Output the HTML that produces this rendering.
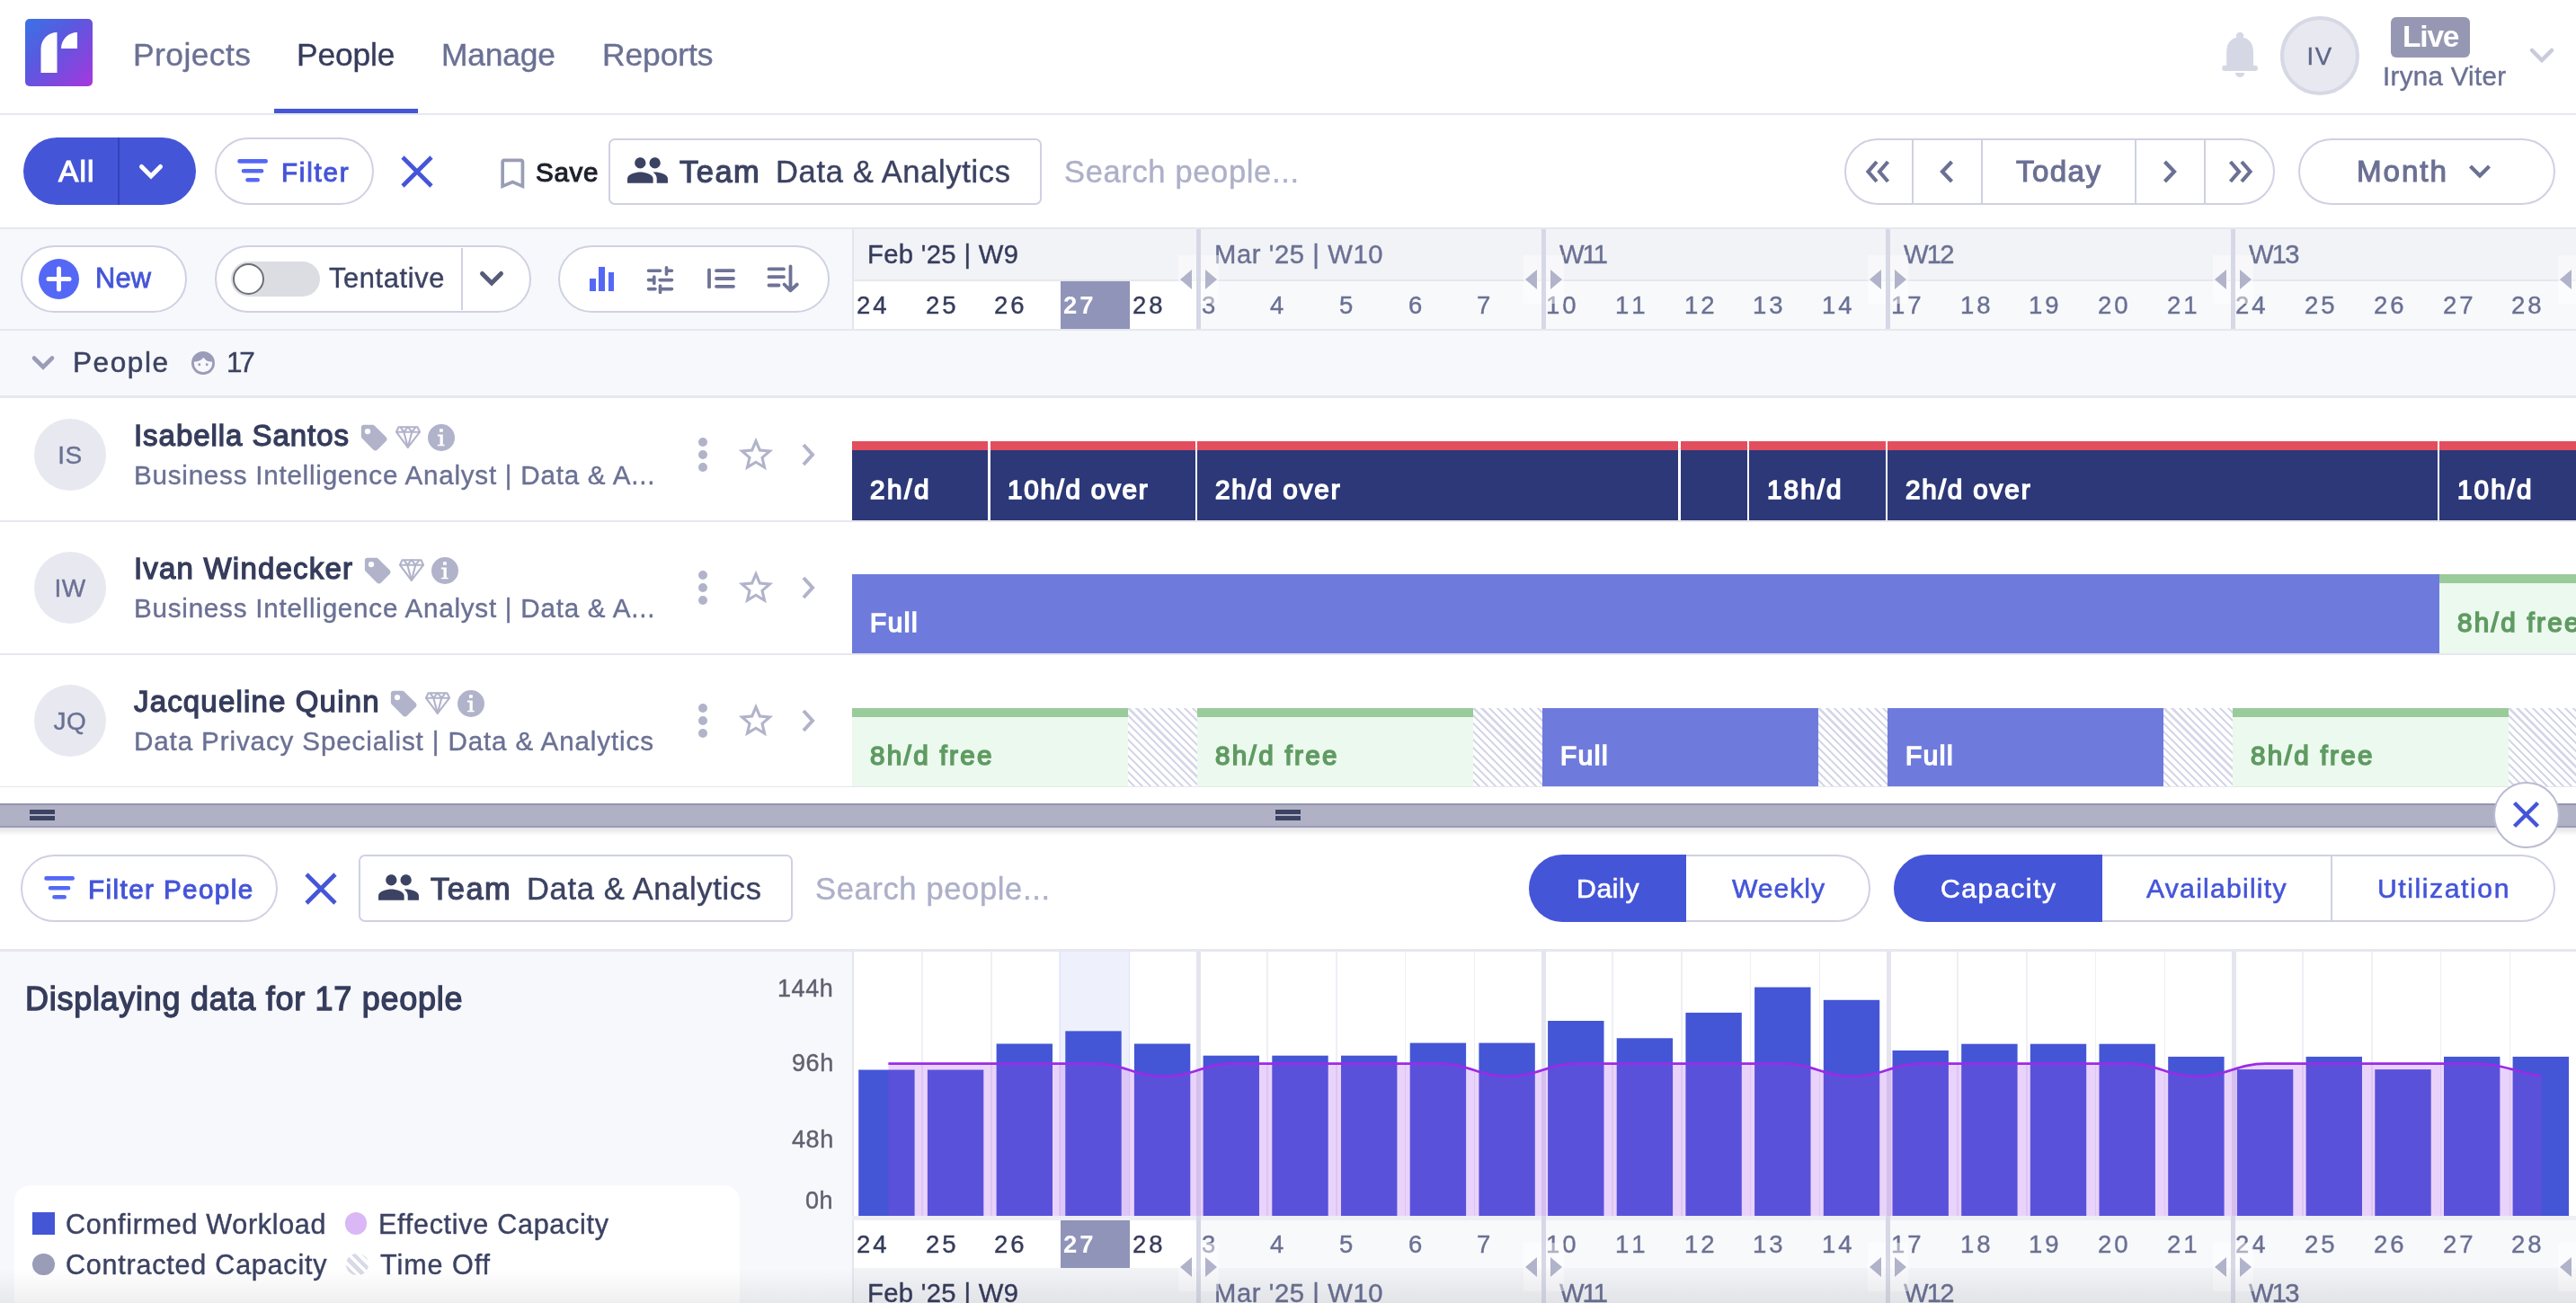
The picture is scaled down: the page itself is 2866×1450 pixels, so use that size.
<!DOCTYPE html>
<html lang="en"><head><meta charset="utf-8"><title>People planner</title>
<style>
html,body{margin:0;padding:0}
body{width:2866px;height:1450px;overflow:hidden;position:relative;background:#fff;
font-family:"Liberation Sans",sans-serif;}
.r{position:absolute;display:block}
.t{position:absolute;white-space:nowrap;line-height:1;will-change:transform;}
</style></head>
<body>
<div class="r" style="left:28px;top:21px;width:75px;height:75px;border-radius:5px;background:linear-gradient(135deg,#3a72e6 0%,#5a59e0 40%,#8545de 75%,#a838dc 100%)"></div>
<svg class="r" style="left:28px;top:21px;" width="75" height="75" viewBox="0 0 75 75"><path d="M17.5 60V33c0-10 8-18 18-18v45z" fill="#fff"/><path d="M40 33c0-10 8-18 18-18v18z" fill="#fff"/></svg>
<div class="t" id="t1" style="left:148.3px;top:43.6px;font-size:35.4px;color:#6b7194;font-weight:400;letter-spacing:0.451px;-webkit-text-stroke:0.4px #6b7194;">Projects</div>
<div class="t" id="t2" style="left:330.3px;top:43.6px;font-size:35.4px;color:#363c5c;font-weight:400;letter-spacing:-0.141px;-webkit-text-stroke:0.4px #363c5c;">People</div>
<div class="t" id="t3" style="left:491.3px;top:43.6px;font-size:35.4px;color:#6b7194;font-weight:400;letter-spacing:-0.181px;-webkit-text-stroke:0.4px #6b7194;">Manage</div>
<div class="t" id="t4" style="left:670.3px;top:43.6px;font-size:35.4px;color:#6b7194;font-weight:400;letter-spacing:-0.070px;-webkit-text-stroke:0.4px #6b7194;">Reports</div>
<div class="r" style="left:0px;top:126px;width:2866px;height:2px;background:#e6e7ef;"></div>
<div class="r" style="left:305px;top:121px;width:160px;height:5px;background:#4555d8;"></div>
<svg class="r" style="left:2470px;top:34px;" width="44" height="54" viewBox="0 0 44 54"><g fill="#d5d7e5"><circle cx="22.1" cy="6" r="4.2"/><path d="M7.200 39V24C7.200 13 13 7.500 22.100 7.500S37 13 37 24V39z"/><rect x="2.200" y="38.800" width="39.800" height="6.200" rx="3.100"/><path d="M17 47h10.200a5.100 5.100 0 0 1-10.200 0z"/></g></svg>
<div class="r" style="left:2537px;top:18px;width:88px;height:88px;border-radius:50%;background:#e7e8f0;border:4.5px solid #d6d8e5;box-sizing:border-box"></div>
<div class="t" id="t5" style="left:2581.0px;transform:translateX(-50%);top:48.7px;font-size:27.5px;color:#5f6587;font-weight:400;letter-spacing:1.5px;-webkit-text-stroke:0.4px #5f6587;">IV</div>
<div class="r" style="left:2659.5px;top:19px;width:88.5px;height:44.7px;background:#9698b3;border-radius:6px;"></div>
<div class="t" id="t6" style="left:2672.8px;top:23.8px;font-size:33.5px;color:#fff;font-weight:700;letter-spacing:-1.182px;">Live</div>
<div class="t" id="t7" style="left:2651.3px;top:70.4px;font-size:29.5px;color:#6b7194;font-weight:400;letter-spacing:0.309px;-webkit-text-stroke:0.4px #6b7194;">Iryna Viter</div>
<svg class="r" style="left:2812px;top:51px;" width="32" height="22" viewBox="0 0 32 22"><path d="M5 5l11 11L27 5" fill="none" stroke="#c9cbdb" stroke-width="4.5" stroke-linecap="round"/></svg>
<div class="r" style="left:26px;top:153px;width:192px;height:74.5px;border-radius:38px;background:#4555d8"></div>
<div class="r" style="left:131px;top:153px;width:2px;height:74.5px;background:#3241bd;"></div>
<div class="t" id="t8" style="left:65.3px;top:173.6px;font-size:33.5px;color:#fff;font-weight:400;letter-spacing:1.133px;-webkit-text-stroke:1.1px #fff;">All</div>
<svg class="r" style="left:152px;top:180px;" width="32" height="22" viewBox="0 0 32 22"><path d="M5.500 5.500l10.500 10.500L26.500 5.500" fill="none" stroke="#fff" stroke-width="5" stroke-linecap="round"/></svg>
<div class="r" style="left:238.5px;top:153px;width:177px;height:74.5px;box-sizing:border-box;border-radius:37.25px;background:#fff;border:2px solid #cfd1e2;"></div>
<svg class="r" style="left:262px;top:175px;" width="38" height="30" viewBox="0 0 38 30"><path d="M4.5 4.4h29.2M9 15.3h20.1M13.5 25.3h11.2" stroke="#5468f5" stroke-width="4.6" stroke-linecap="round" fill="none"/></svg>
<div class="t" id="t9" style="left:313.1px;top:176.7px;font-size:29.6px;color:#4555d8;font-weight:400;letter-spacing:1.787px;-webkit-text-stroke:1px #4555d8;">Filter</div>
<svg class="r" style="left:444px;top:172px;" width="40" height="38" viewBox="0 0 40 38"><path d="M4 3l32 32M36 3L4 35" stroke="#4555d8" stroke-width="4.6" fill="none"/></svg>
<svg class="r" style="left:548.3px;top:171px;" width="44.6" height="44.6" viewBox="0 0 24 24"><path fill="#9a9db6" d="M17 3H7c-1.1 0-1.99.9-1.99 2L5 21l7-3 7 3V5c0-1.1-.9-2-2-2zm0 15l-5-2.18L7 18V5h10v13z"/></svg>
<div class="t" id="t10" style="left:596.0px;top:176.5px;font-size:29.6px;color:#1d202c;font-weight:400;letter-spacing:0.682px;-webkit-text-stroke:1.1px #1d202c;">Save</div>
<div class="r" style="left:676.5px;top:153.5px;width:482px;height:74px;box-sizing:border-box;border-radius:7px;background:#fff;border:2px solid #cfd1e2"></div>
<svg class="r" style="left:696px;top:165.3px;" width="49" height="49" viewBox="0 0 24 24"><path fill="#3c4262" d="M16 11c1.66 0 2.99-1.34 2.99-3S17.66 5 16 5c-1.66 0-3 1.34-3 3s1.34 3 3 3zm-8 0c1.66 0 2.99-1.34 2.99-3S9.66 5 8 5C6.34 5 5 6.34 5 8s1.34 3 3 3zm0 2c-2.33 0-7 1.17-7 3.5V19h14v-2.5c0-2.33-4.67-3.5-7-3.5zm8 0c-.29 0-.62.02-.97.05 1.16.84 1.97 1.97 1.97 3.45V19h6v-2.5c0-2.33-4.67-3.5-7-3.5z"/></svg>
<div class="t" id="t11" style="left:756.3px;top:174.3px;font-size:34.5px;color:#3c4262;font-weight:400;letter-spacing:1.475px;-webkit-text-stroke:1.2px #3c4262;">Team</div>
<div class="t" id="t12" style="left:862.8px;top:174.3px;font-size:34.5px;color:#3c4262;font-weight:400;letter-spacing:0.647px;-webkit-text-stroke:0.4px #3c4262;">Data &amp; Analytics</div>
<div class="t" id="t13" style="left:1184.3px;top:174.3px;font-size:34.5px;color:#adb0c8;font-weight:400;letter-spacing:0.649px;-webkit-text-stroke:0.4px #adb0c8;">Search people...</div>
<div class="r" style="left:2051.5px;top:153.5px;width:479px;height:74px;box-sizing:border-box;border-radius:37px;background:#fff;border:2px solid #cfd1e2;"></div>
<div class="r" style="left:2127px;top:155px;width:2px;height:71px;background:#cfd1e2;"></div>
<div class="r" style="left:2204px;top:155px;width:2px;height:71px;background:#cfd1e2;"></div>
<div class="r" style="left:2375px;top:155px;width:2px;height:71px;background:#cfd1e2;"></div>
<div class="r" style="left:2452px;top:155px;width:2px;height:71px;background:#cfd1e2;"></div>
<svg class="r" style="left:2075px;top:177px;" width="30" height="28" viewBox="0 0 30 28"><path d="M13 3L3.5 14 13 25M25.5 3L16 14l9.5 11" fill="none" stroke="#6b7094" stroke-width="4.2"/></svg>
<svg class="r" style="left:2156px;top:177px;" width="20" height="28" viewBox="0 0 20 28"><path d="M15.5 3L5 14l10.5 11" fill="none" stroke="#6b7094" stroke-width="4.2"/></svg>
<div class="t" id="t14" style="left:2243.1px;top:173.9px;font-size:33.2px;color:#6b7094;font-weight:400;letter-spacing:1.359px;-webkit-text-stroke:1.1px #6b7094;">Today</div>
<svg class="r" style="left:2404px;top:177px;" width="20" height="28" viewBox="0 0 20 28"><path d="M4.5 3L15 14 4.5 25" fill="none" stroke="#6b7094" stroke-width="4.2"/></svg>
<svg class="r" style="left:2477px;top:177px;" width="30" height="28" viewBox="0 0 30 28"><path d="M4.5 3L14 14 4.5 25M17 3l9.5 11L17 25" fill="none" stroke="#6b7094" stroke-width="4.2"/></svg>
<div class="r" style="left:2556.5px;top:153.5px;width:286px;height:74px;box-sizing:border-box;border-radius:37px;background:#fff;border:2px solid #cfd1e2;"></div>
<div class="t" id="t15" style="left:2622.4px;top:173.9px;font-size:33.2px;color:#6b7094;font-weight:400;letter-spacing:1.938px;-webkit-text-stroke:1.1px #6b7094;">Month</div>
<svg class="r" style="left:2745px;top:181px;" width="28" height="20" viewBox="0 0 28 20"><path d="M3.5 4L14 14.5 24.5 4" fill="none" stroke="#6b7094" stroke-width="4.2"/></svg>
<div class="r" style="left:0px;top:253px;width:2866px;height:2px;background:#e6e7ef;"></div>
<div class="r" style="left:0px;top:255px;width:2866px;height:111px;background:#f7f8fb;"></div>
<div class="r" style="left:23px;top:273px;width:184.5px;height:74.5px;box-sizing:border-box;border-radius:37.25px;background:#fff;border:2px solid #cfd1e2;"></div>
<div class="r" style="left:43px;top:288px;width:45px;height:45px;border-radius:50%;background:#5468f5"></div>
<svg class="r" style="left:43px;top:288px;" width="45" height="45" viewBox="0 0 45 45"><path d="M22.5 11v23M11 22.5h23" stroke="#fff" stroke-width="5" stroke-linecap="round"/></svg>
<div class="t" id="t16" style="left:106.0px;top:294.9px;font-size:30.8px;color:#4555d8;font-weight:400;letter-spacing:0.195px;-webkit-text-stroke:0.8px #4555d8;">New</div>
<div class="r" style="left:239px;top:273px;width:351.5px;height:74.5px;box-sizing:border-box;border-radius:37.25px;background:#fff;border:2px solid #cfd1e2;"></div>
<div class="r" style="left:256.5px;top:290.5px;width:99px;height:39px;border-radius:20px;background:#dcdde2"></div>
<div class="r" style="left:258.5px;top:292.5px;width:35px;height:35px;border-radius:50%;box-sizing:border-box;background:#fff;border:2.5px solid #6d7078"></div>
<div class="t" id="t17" style="left:365.8px;top:294.9px;font-size:30.8px;color:#3c4262;font-weight:400;letter-spacing:0.654px;-webkit-text-stroke:0.4px #3c4262;">Tentative</div>
<div class="r" style="left:513px;top:276px;width:2px;height:69px;background:#cfd1e2;"></div>
<svg class="r" style="left:531px;top:299px;" width="32" height="22" viewBox="0 0 32 22"><path d="M5.500 5.500l10.500 10.500L26.500 5.500" fill="none" stroke="#565b78" stroke-width="5" stroke-linecap="round"/></svg>
<div class="r" style="left:621px;top:273px;width:302px;height:74.5px;box-sizing:border-box;border-radius:37.25px;background:#fff;border:2px solid #cfd1e2;"></div>
<div class="r" style="left:656px;top:310px;width:7px;height:14px;background:#5468f5;"></div>
<div class="r" style="left:666.2px;top:297px;width:7px;height:27px;background:#5468f5;"></div>
<div class="r" style="left:676.8px;top:303px;width:6.4px;height:21px;background:#5468f5;"></div>
<svg class="r" style="left:719px;top:296px;" width="31" height="31" viewBox="0 0 31 31"><g stroke="#6f7396" stroke-width="3.6" stroke-linecap="round" fill="none"><path d="M2.5 5.3h13M22.5 5.3h6M22.5 1.8v7.4"/><path d="M2.5 15.6h6M15 15.6h13.5M8.8 12v7.4"/><path d="M2.5 25.6h7.5M15.5 25.6h13M15.5 22v7.4"/></g></svg>
<svg class="r" style="left:785px;top:296px;" width="35" height="28" viewBox="0 0 35 28"><g stroke="#6f7396" stroke-width="3.8" stroke-linecap="round" fill="none"><path d="M4 4.3v19"/><path d="M12 5.2h19M12 14h19M12 22.8h19"/></g></svg>
<svg class="r" style="left:852px;top:293px;" width="38" height="34" viewBox="0 0 38 34"><g stroke="#6f7396" stroke-width="3.8" stroke-linecap="round" stroke-linejoin="round" fill="none"><path d="M3.5 6.4h16.5M3.5 15.2h16.5M3.5 24.5h11"/><path d="M27.5 3.5v26M20.5 23.5l7 6.8 7.3-6.8"/></g></svg>
<div class="r" style="left:948px;top:255px;width:2px;height:111px;background:#e4e5ee;"></div>
<div class="r" style="left:950px;top:255px;width:1916px;height:56px;background:#f2f3f6;"></div>
<div class="r" style="left:950px;top:310.6px;width:1916px;height:2px;background:#e6e7ee;"></div>
<div class="r" style="left:950px;top:312.5px;width:384px;height:53.5px;background:#fff;"></div>
<div class="r" style="left:1334px;top:312.5px;width:1532px;height:53.5px;background:#f8f9fb;"></div>
<div class="r" style="left:1180.2px;top:312.5px;width:76.8px;height:53.5px;background:#8f94b8;"></div>
<div class="t" id="t18" style="left:965.0px;top:269.0px;font-size:29.2px;color:#363c5c;font-weight:400;letter-spacing:0.361px;-webkit-text-stroke:0.4px #363c5c;">Feb '25 | W9</div>
<div class="t" id="t19" style="left:952.8px;top:325.7px;font-size:27.5px;color:#363c5c;font-weight:400;letter-spacing:2.906px;-webkit-text-stroke:0.4px #363c5c;">24</div>
<div class="t" id="t20" style="left:1029.5px;top:325.7px;font-size:27.5px;color:#363c5c;font-weight:400;letter-spacing:2.906px;-webkit-text-stroke:0.4px #363c5c;">25</div>
<div class="t" id="t21" style="left:1106.3px;top:325.7px;font-size:27.5px;color:#363c5c;font-weight:400;letter-spacing:2.906px;-webkit-text-stroke:0.4px #363c5c;">26</div>
<div class="t" id="t22" style="left:1183.0px;top:325.7px;font-size:27.5px;color:#fff;font-weight:700;letter-spacing:2.906px;">27</div>
<div class="t" id="t23" style="left:1259.7px;top:325.7px;font-size:27.5px;color:#363c5c;font-weight:400;letter-spacing:2.906px;-webkit-text-stroke:0.4px #363c5c;">28</div>
<div class="t" id="t24" style="left:1351.0px;top:269.0px;font-size:29.2px;color:#6b7194;font-weight:400;letter-spacing:0.605px;-webkit-text-stroke:0.4px #6b7194;">Mar '25 | W10</div>
<div class="t" id="t25" style="left:1336.5px;top:325.7px;font-size:27.5px;color:#6b7194;font-weight:400;letter-spacing:0.703px;-webkit-text-stroke:0.4px #6b7194;">3</div>
<div class="t" id="t26" style="left:1413.2px;top:325.7px;font-size:27.5px;color:#6b7194;font-weight:400;letter-spacing:0.703px;-webkit-text-stroke:0.4px #6b7194;">4</div>
<div class="t" id="t27" style="left:1489.9px;top:325.7px;font-size:27.5px;color:#6b7194;font-weight:400;letter-spacing:0.703px;-webkit-text-stroke:0.4px #6b7194;">5</div>
<div class="t" id="t28" style="left:1566.6px;top:325.7px;font-size:27.5px;color:#6b7194;font-weight:400;letter-spacing:0.703px;-webkit-text-stroke:0.4px #6b7194;">6</div>
<div class="t" id="t29" style="left:1643.4px;top:325.7px;font-size:27.5px;color:#6b7194;font-weight:400;letter-spacing:0.703px;-webkit-text-stroke:0.4px #6b7194;">7</div>
<div class="t" id="t30" style="left:1734.6px;top:269.0px;font-size:29.2px;color:#6b7194;font-weight:400;letter-spacing:-1.930px;-webkit-text-stroke:0.4px #6b7194;">W11</div>
<div class="t" id="t31" style="left:1720.1px;top:325.7px;font-size:27.5px;color:#6b7194;font-weight:400;letter-spacing:2.906px;-webkit-text-stroke:0.4px #6b7194;">10</div>
<div class="t" id="t32" style="left:1796.8px;top:325.7px;font-size:27.5px;color:#6b7194;font-weight:400;letter-spacing:4.938px;-webkit-text-stroke:0.4px #6b7194;">11</div>
<div class="t" id="t33" style="left:1873.6px;top:325.7px;font-size:27.5px;color:#6b7194;font-weight:400;letter-spacing:2.906px;-webkit-text-stroke:0.4px #6b7194;">12</div>
<div class="t" id="t34" style="left:1950.3px;top:325.7px;font-size:27.5px;color:#6b7194;font-weight:400;letter-spacing:2.906px;-webkit-text-stroke:0.4px #6b7194;">13</div>
<div class="t" id="t35" style="left:2027.0px;top:325.7px;font-size:27.5px;color:#6b7194;font-weight:400;letter-spacing:2.906px;-webkit-text-stroke:0.4px #6b7194;">14</div>
<div class="t" id="t36" style="left:2118.2px;top:269.0px;font-size:29.2px;color:#6b7194;font-weight:400;letter-spacing:-1.758px;-webkit-text-stroke:0.4px #6b7194;">W12</div>
<div class="t" id="t37" style="left:2103.8px;top:325.7px;font-size:27.5px;color:#6b7194;font-weight:400;letter-spacing:2.906px;-webkit-text-stroke:0.4px #6b7194;">17</div>
<div class="t" id="t38" style="left:2180.5px;top:325.7px;font-size:27.5px;color:#6b7194;font-weight:400;letter-spacing:2.906px;-webkit-text-stroke:0.4px #6b7194;">18</div>
<div class="t" id="t39" style="left:2257.2px;top:325.7px;font-size:27.5px;color:#6b7194;font-weight:400;letter-spacing:2.906px;-webkit-text-stroke:0.4px #6b7194;">19</div>
<div class="t" id="t40" style="left:2333.9px;top:325.7px;font-size:27.5px;color:#6b7194;font-weight:400;letter-spacing:2.906px;-webkit-text-stroke:0.4px #6b7194;">20</div>
<div class="t" id="t41" style="left:2410.7px;top:325.7px;font-size:27.5px;color:#6b7194;font-weight:400;letter-spacing:2.906px;-webkit-text-stroke:0.4px #6b7194;">21</div>
<div class="t" id="t42" style="left:2501.9px;top:269.0px;font-size:29.2px;color:#6b7194;font-weight:400;letter-spacing:-1.758px;-webkit-text-stroke:0.4px #6b7194;">W13</div>
<div class="t" id="t43" style="left:2487.4px;top:325.7px;font-size:27.5px;color:#6b7194;font-weight:400;letter-spacing:2.906px;-webkit-text-stroke:0.4px #6b7194;">24</div>
<div class="t" id="t44" style="left:2564.1px;top:325.7px;font-size:27.5px;color:#6b7194;font-weight:400;letter-spacing:2.906px;-webkit-text-stroke:0.4px #6b7194;">25</div>
<div class="t" id="t45" style="left:2640.9px;top:325.7px;font-size:27.5px;color:#6b7194;font-weight:400;letter-spacing:2.906px;-webkit-text-stroke:0.4px #6b7194;">26</div>
<div class="t" id="t46" style="left:2717.6px;top:325.7px;font-size:27.5px;color:#6b7194;font-weight:400;letter-spacing:2.906px;-webkit-text-stroke:0.4px #6b7194;">27</div>
<div class="t" id="t47" style="left:2794.3px;top:325.7px;font-size:27.5px;color:#6b7194;font-weight:400;letter-spacing:2.906px;-webkit-text-stroke:0.4px #6b7194;">28</div>
<div class="r" style="left:1331px;top:255px;width:5px;height:111px;background:#d7d8e6;"></div>
<div class="r" style="left:1714.65px;top:255px;width:5px;height:111px;background:#d7d8e6;"></div>
<div class="r" style="left:2098.3px;top:255px;width:5px;height:111px;background:#d7d8e6;"></div>
<div class="r" style="left:2481.95px;top:255px;width:5px;height:111px;background:#d7d8e6;"></div>
<div class="r" style="left:2865.6px;top:255px;width:5px;height:111px;background:#d7d8e6;"></div>
<div class="r" style="left:1311px;top:283.5px;width:20px;height:54px;background:rgba(255,255,255,0.45);"></div>
<div class="r" style="left:1336px;top:283.5px;width:20px;height:54px;background:rgba(255,255,255,0.45);"></div>
<svg class="r" style="left:1313px;top:299.5px;" width="13" height="22" viewBox="0 0 13 22"><path d="M13 0v22L0 11z" fill="#b1b3ca"/></svg>
<svg class="r" style="left:1341px;top:299.5px;" width="13" height="22" viewBox="0 0 13 22"><path d="M0 0v22l13-11z" fill="#b1b3ca"/></svg>
<div class="r" style="left:1694.65px;top:283.5px;width:20px;height:54px;background:rgba(255,255,255,0.45);"></div>
<div class="r" style="left:1719.65px;top:283.5px;width:20px;height:54px;background:rgba(255,255,255,0.45);"></div>
<svg class="r" style="left:1696.65px;top:299.5px;" width="13" height="22" viewBox="0 0 13 22"><path d="M13 0v22L0 11z" fill="#b1b3ca"/></svg>
<svg class="r" style="left:1724.65px;top:299.5px;" width="13" height="22" viewBox="0 0 13 22"><path d="M0 0v22l13-11z" fill="#b1b3ca"/></svg>
<div class="r" style="left:2078.3px;top:283.5px;width:20px;height:54px;background:rgba(255,255,255,0.45);"></div>
<div class="r" style="left:2103.3px;top:283.5px;width:20px;height:54px;background:rgba(255,255,255,0.45);"></div>
<svg class="r" style="left:2080.3px;top:299.5px;" width="13" height="22" viewBox="0 0 13 22"><path d="M13 0v22L0 11z" fill="#b1b3ca"/></svg>
<svg class="r" style="left:2108.3px;top:299.5px;" width="13" height="22" viewBox="0 0 13 22"><path d="M0 0v22l13-11z" fill="#b1b3ca"/></svg>
<div class="r" style="left:2461.95px;top:283.5px;width:20px;height:54px;background:rgba(255,255,255,0.45);"></div>
<div class="r" style="left:2486.95px;top:283.5px;width:20px;height:54px;background:rgba(255,255,255,0.45);"></div>
<svg class="r" style="left:2463.95px;top:299.5px;" width="13" height="22" viewBox="0 0 13 22"><path d="M13 0v22L0 11z" fill="#b1b3ca"/></svg>
<svg class="r" style="left:2491.95px;top:299.5px;" width="13" height="22" viewBox="0 0 13 22"><path d="M0 0v22l13-11z" fill="#b1b3ca"/></svg>
<div class="r" style="left:2845.6px;top:283.5px;width:20px;height:54px;background:rgba(255,255,255,0.45);"></div>
<div class="r" style="left:2870.6px;top:283.5px;width:20px;height:54px;background:rgba(255,255,255,0.45);"></div>
<svg class="r" style="left:2847.6px;top:299.5px;" width="13" height="22" viewBox="0 0 13 22"><path d="M13 0v22L0 11z" fill="#b1b3ca"/></svg>
<svg class="r" style="left:2875.6px;top:299.5px;" width="13" height="22" viewBox="0 0 13 22"><path d="M0 0v22l13-11z" fill="#b1b3ca"/></svg>
<div class="r" style="left:0px;top:366px;width:2866px;height:2px;background:#e6e7ef;"></div>
<div class="r" style="left:0px;top:442.5px;width:2866px;height:434px;background:#fff;"></div>
<div class="r" style="left:38px;top:466px;width:80px;height:80px;border-radius:50%;background:#e8e9f0"></div>
<div class="t" id="t48" style="left:78.0px;transform:translateX(-50%);top:492.5px;font-size:28px;color:#6b7194;font-weight:400;letter-spacing:0.5px;-webkit-text-stroke:0.4px #6b7194;">IS</div>
<div class="t" id="t49" style="left:149.2px;top:468.0px;font-size:33px;color:#363c5c;font-weight:400;letter-spacing:0.953px;-webkit-text-stroke:1.3px #363c5c;">Isabella Santos</div>
<svg class="r" style="left:398.9px;top:469.7px;" width="34.4" height="34.4" viewBox="0 0 24 24"><path fill="#b1b3ca" fill-rule="evenodd" d="M21.41 11.58l-9-9C12.05 2.22 11.55 2 11 2H4c-1.1 0-2 .9-2 2v7c0 .55.22 1.05.59 1.42l9 9c.36.36.86.58 1.41.58.55 0 1.05-.22 1.41-.59l7-7c.37-.36.59-.86.59-1.41 0-.55-.23-1.06-.59-1.42zM7 4.800a2.200 2.200 0 1 0 0 4.400a2.200 2.200 0 1 0 0-4.400z"/></svg>
<svg class="r" style="left:440.2px;top:473.6px;" width="28" height="26" viewBox="0 0 28 26"><g fill="none" stroke="#b1b3ca" stroke-width="2.1" stroke-linejoin="round"><path d="M3.500 1.200H24.500L27.100 6.700 13.800 23.800 0.900 6.700z"/><path d="M0.900 6.700H27.100M5.400 1.200L9.300 6.700 13.800 1.200 18.300 6.700 22.600 1.200M9.300 6.700L13.800 23.800 18.300 6.700"/></g></svg>
<div class="r" style="left:476.4px;top:472px;width:30px;height:30px;border-radius:50%;background:#b1b3ca"></div>
<svg class="r" style="left:476.4px;top:472px;" width="30" height="30" viewBox="0 0 30 30"><path fill="#fff" d="M13 5.300h3.800v3.500H13zM10.900 11.600h5.900v11.100h1.900v1.600h-7.800v-1.600h2.600v-9.300h-2.600z"/></svg>
<div class="t" id="t50" style="left:149.2px;top:513.7px;font-size:29.6px;color:#6b7194;font-weight:400;letter-spacing:0.766px;-webkit-text-stroke:0.4px #6b7194;">Business Intelligence Analyst | Data &amp; A...</div>
<div class="r" style="left:776.5px;top:487px;width:10px;height:10px;border-radius:50%;background:#b1b3ca"></div>
<div class="r" style="left:776.5px;top:501px;width:10px;height:10px;border-radius:50%;background:#b1b3ca"></div>
<div class="r" style="left:776.5px;top:515px;width:10px;height:10px;border-radius:50%;background:#b1b3ca"></div>
<svg class="r" style="left:818px;top:482.5px;" width="46" height="46" viewBox="0 0 24 24"><path fill="#b1b3ca" d="M22 9.24l-7.19-.62L12 2 9.19 8.63 2 9.24l5.46 4.73L5.82 21 12 17.27 18.18 21l-1.63-7.03L22 9.24zM12 15.4l-3.76 2.27 1-4.28-3.32-2.880 4.380-.380L12 6.100l1.710 4.040 4.380.380-3.320 2.880 1 4.280L12 15.400z"/></svg>
<svg class="r" style="left:889px;top:492px;" width="20" height="28" viewBox="0 0 20 28"><path d="M5 3l10 11L5 25" fill="none" stroke="#b1b3ca" stroke-width="4"/></svg>
<div class="r" style="left:0px;top:579px;width:2866px;height:2.3px;background:#e6e7ef;"></div>
<div class="r" style="left:38px;top:614px;width:80px;height:80px;border-radius:50%;background:#e8e9f0"></div>
<div class="t" id="t51" style="left:78.0px;transform:translateX(-50%);top:640.5px;font-size:28px;color:#6b7194;font-weight:400;letter-spacing:0.5px;-webkit-text-stroke:0.4px #6b7194;">IW</div>
<div class="t" id="t52" style="left:149.2px;top:616.0px;font-size:33px;color:#363c5c;font-weight:400;letter-spacing:1.197px;-webkit-text-stroke:1.3px #363c5c;">Ivan Windecker</div>
<svg class="r" style="left:402.6px;top:617.7px;" width="34.4" height="34.4" viewBox="0 0 24 24"><path fill="#b1b3ca" fill-rule="evenodd" d="M21.41 11.58l-9-9C12.05 2.22 11.55 2 11 2H4c-1.1 0-2 .9-2 2v7c0 .55.22 1.05.59 1.42l9 9c.36.36.86.58 1.41.58.55 0 1.05-.22 1.41-.59l7-7c.37-.36.59-.86.59-1.41 0-.55-.23-1.06-.59-1.42zM7 4.800a2.200 2.200 0 1 0 0 4.400a2.200 2.200 0 1 0 0-4.400z"/></svg>
<svg class="r" style="left:443.9px;top:621.6px;" width="28" height="26" viewBox="0 0 28 26"><g fill="none" stroke="#b1b3ca" stroke-width="2.1" stroke-linejoin="round"><path d="M3.500 1.200H24.500L27.100 6.700 13.800 23.800 0.900 6.700z"/><path d="M0.900 6.700H27.100M5.400 1.200L9.300 6.700 13.800 1.200 18.300 6.700 22.600 1.200M9.300 6.700L13.800 23.800 18.300 6.700"/></g></svg>
<div class="r" style="left:480.1px;top:620px;width:30px;height:30px;border-radius:50%;background:#b1b3ca"></div>
<svg class="r" style="left:480.1px;top:620px;" width="30" height="30" viewBox="0 0 30 30"><path fill="#fff" d="M13 5.300h3.800v3.500H13zM10.900 11.600h5.900v11.100h1.900v1.600h-7.800v-1.600h2.600v-9.300h-2.600z"/></svg>
<div class="t" id="t53" style="left:149.2px;top:661.7px;font-size:29.6px;color:#6b7194;font-weight:400;letter-spacing:0.766px;-webkit-text-stroke:0.4px #6b7194;">Business Intelligence Analyst | Data &amp; A...</div>
<div class="r" style="left:776.5px;top:635px;width:10px;height:10px;border-radius:50%;background:#b1b3ca"></div>
<div class="r" style="left:776.5px;top:649px;width:10px;height:10px;border-radius:50%;background:#b1b3ca"></div>
<div class="r" style="left:776.5px;top:663px;width:10px;height:10px;border-radius:50%;background:#b1b3ca"></div>
<svg class="r" style="left:818px;top:630.5px;" width="46" height="46" viewBox="0 0 24 24"><path fill="#b1b3ca" d="M22 9.24l-7.19-.62L12 2 9.19 8.63 2 9.24l5.46 4.73L5.82 21 12 17.27 18.18 21l-1.63-7.03L22 9.24zM12 15.4l-3.76 2.27 1-4.28-3.32-2.880 4.380-.380L12 6.100l1.710 4.040 4.380.380-3.320 2.880 1 4.280L12 15.400z"/></svg>
<svg class="r" style="left:889px;top:640px;" width="20" height="28" viewBox="0 0 20 28"><path d="M5 3l10 11L5 25" fill="none" stroke="#b1b3ca" stroke-width="4"/></svg>
<div class="r" style="left:0px;top:727px;width:2866px;height:2.3px;background:#e6e7ef;"></div>
<div class="r" style="left:38px;top:762px;width:80px;height:80px;border-radius:50%;background:#e8e9f0"></div>
<div class="t" id="t54" style="left:78.0px;transform:translateX(-50%);top:788.5px;font-size:28px;color:#6b7194;font-weight:400;letter-spacing:0.5px;-webkit-text-stroke:0.4px #6b7194;">JQ</div>
<div class="t" id="t55" style="left:149.2px;top:764.0px;font-size:33px;color:#363c5c;font-weight:400;letter-spacing:1.166px;-webkit-text-stroke:1.3px #363c5c;">Jacqueline Quinn</div>
<svg class="r" style="left:431.7px;top:765.7px;" width="34.4" height="34.4" viewBox="0 0 24 24"><path fill="#b1b3ca" fill-rule="evenodd" d="M21.41 11.58l-9-9C12.05 2.22 11.55 2 11 2H4c-1.1 0-2 .9-2 2v7c0 .55.22 1.05.59 1.42l9 9c.36.36.86.58 1.41.58.55 0 1.05-.22 1.41-.59l7-7c.37-.36.59-.86.59-1.41 0-.55-.23-1.06-.59-1.42zM7 4.800a2.200 2.200 0 1 0 0 4.400a2.200 2.200 0 1 0 0-4.400z"/></svg>
<svg class="r" style="left:473px;top:769.6px;" width="28" height="26" viewBox="0 0 28 26"><g fill="none" stroke="#b1b3ca" stroke-width="2.1" stroke-linejoin="round"><path d="M3.500 1.200H24.500L27.100 6.700 13.800 23.800 0.900 6.700z"/><path d="M0.900 6.700H27.100M5.400 1.200L9.300 6.700 13.800 1.200 18.300 6.700 22.600 1.200M9.300 6.700L13.800 23.800 18.300 6.700"/></g></svg>
<div class="r" style="left:509.2px;top:768px;width:30px;height:30px;border-radius:50%;background:#b1b3ca"></div>
<svg class="r" style="left:509.2px;top:768px;" width="30" height="30" viewBox="0 0 30 30"><path fill="#fff" d="M13 5.300h3.800v3.500H13zM10.900 11.600h5.900v11.100h1.900v1.600h-7.800v-1.600h2.600v-9.300h-2.600z"/></svg>
<div class="t" id="t56" style="left:149.2px;top:809.7px;font-size:29.6px;color:#6b7194;font-weight:400;letter-spacing:0.872px;-webkit-text-stroke:0.4px #6b7194;">Data Privacy Specialist | Data &amp; Analytics</div>
<div class="r" style="left:776.5px;top:783px;width:10px;height:10px;border-radius:50%;background:#b1b3ca"></div>
<div class="r" style="left:776.5px;top:797px;width:10px;height:10px;border-radius:50%;background:#b1b3ca"></div>
<div class="r" style="left:776.5px;top:811px;width:10px;height:10px;border-radius:50%;background:#b1b3ca"></div>
<svg class="r" style="left:818px;top:778.5px;" width="46" height="46" viewBox="0 0 24 24"><path fill="#b1b3ca" d="M22 9.24l-7.19-.62L12 2 9.19 8.63 2 9.24l5.46 4.73L5.82 21 12 17.27 18.18 21l-1.63-7.03L22 9.24zM12 15.4l-3.76 2.27 1-4.28-3.32-2.880 4.380-.380L12 6.100l1.710 4.040 4.380.380-3.320 2.880 1 4.280L12 15.400z"/></svg>
<svg class="r" style="left:889px;top:788px;" width="20" height="28" viewBox="0 0 20 28"><path d="M5 3l10 11L5 25" fill="none" stroke="#b1b3ca" stroke-width="4"/></svg>
<div class="r" style="left:0px;top:875px;width:2866px;height:2.3px;background:#e6e7ef;"></div>
<div class="r" style="left:948px;top:491px;width:151.4px;height:88px;background:#2c3878;"></div>
<div class="r" style="left:948px;top:491px;width:151.4px;height:10px;background:#e24e5e;"></div>
<div class="t" id="t57" style="left:967.8px;top:529.6px;font-size:29.6px;color:#fff;font-weight:400;letter-spacing:2.630px;-webkit-text-stroke:1.6px #fff;">2h/d</div>
<div class="r" style="left:1101.6px;top:491px;width:228.2px;height:88px;background:#2c3878;"></div>
<div class="r" style="left:1101.6px;top:491px;width:228.2px;height:10px;background:#e24e5e;"></div>
<div class="t" id="t58" style="left:1121.4px;top:529.6px;font-size:29.6px;color:#fff;font-weight:400;letter-spacing:1.738px;-webkit-text-stroke:1.6px #fff;">10h/d over</div>
<div class="r" style="left:1332px;top:491px;width:535.4px;height:88px;background:#2c3878;"></div>
<div class="r" style="left:1332px;top:491px;width:535.4px;height:10px;background:#e24e5e;"></div>
<div class="t" id="t59" style="left:1351.8px;top:529.6px;font-size:29.6px;color:#fff;font-weight:400;letter-spacing:1.889px;-webkit-text-stroke:1.6px #fff;">2h/d over</div>
<div class="r" style="left:1869.6px;top:491px;width:74.6px;height:88px;background:#2c3878;"></div>
<div class="r" style="left:1869.6px;top:491px;width:74.6px;height:10px;background:#e24e5e;"></div>
<div class="r" style="left:1946.4px;top:491px;width:151.4px;height:88px;background:#2c3878;"></div>
<div class="r" style="left:1946.4px;top:491px;width:151.4px;height:10px;background:#e24e5e;"></div>
<div class="t" id="t60" style="left:1966.2px;top:529.6px;font-size:29.6px;color:#fff;font-weight:400;letter-spacing:2.109px;-webkit-text-stroke:1.6px #fff;">18h/d</div>
<div class="r" style="left:2100px;top:491px;width:612.2px;height:88px;background:#2c3878;"></div>
<div class="r" style="left:2100px;top:491px;width:612.2px;height:10px;background:#e24e5e;"></div>
<div class="t" id="t61" style="left:2119.8px;top:529.6px;font-size:29.6px;color:#fff;font-weight:400;letter-spacing:1.889px;-webkit-text-stroke:1.6px #fff;">2h/d over</div>
<div class="r" style="left:2714.4px;top:491px;width:151.6px;height:88px;background:#2c3878;"></div>
<div class="r" style="left:2714.4px;top:491px;width:151.6px;height:10px;background:#e24e5e;"></div>
<div class="t" id="t62" style="left:2734.2px;top:529.6px;font-size:29.6px;color:#fff;font-weight:400;letter-spacing:2.109px;-webkit-text-stroke:1.6px #fff;">10h/d</div>
<div class="r" style="left:948px;top:639px;width:1766.4px;height:88px;background:#6e7bdc;"></div>
<div class="t" id="t63" style="left:967.8px;top:677.6px;font-size:29.6px;color:#fff;font-weight:400;letter-spacing:1.604px;-webkit-text-stroke:1.6px #fff;">Full</div>
<div class="r" style="left:2714.4px;top:639px;width:151.6px;height:88px;background:#ecf9ee;"></div>
<div class="r" style="left:2714.4px;top:639px;width:151.6px;height:10px;background:#9acb9b;"></div>
<div class="t" id="t64" style="left:2734.2px;top:677.6px;font-size:29.6px;color:#5f9b62;font-weight:400;letter-spacing:2.334px;-webkit-text-stroke:1.6px #5f9b62;">8h/d free</div>
<div class="r" style="left:948px;top:788.2px;width:307.2px;height:86.8px;background:#ecf9ee;"></div>
<div class="r" style="left:948px;top:788.2px;width:307.2px;height:10px;background:#9acb9b;"></div>
<div class="t" id="t65" style="left:967.8px;top:825.6px;font-size:29.6px;color:#5f9b62;font-weight:400;letter-spacing:2.334px;-webkit-text-stroke:1.6px #5f9b62;">8h/d free</div>
<div class="r" style="left:1255.2px;top:788.2px;width:76.8px;height:86.8px;background:repeating-linear-gradient(45deg,#ffffff 0px,#ffffff 4.1px,#d6d7e9 4.1px,#d6d7e9 6.3px);"></div>
<div class="r" style="left:1332px;top:788.2px;width:307.2px;height:86.8px;background:#ecf9ee;"></div>
<div class="r" style="left:1332px;top:788.2px;width:307.2px;height:10px;background:#9acb9b;"></div>
<div class="t" id="t66" style="left:1351.8px;top:825.6px;font-size:29.6px;color:#5f9b62;font-weight:400;letter-spacing:2.334px;-webkit-text-stroke:1.6px #5f9b62;">8h/d free</div>
<div class="r" style="left:1639.2px;top:788.2px;width:76.8px;height:86.8px;background:repeating-linear-gradient(45deg,#ffffff 0px,#ffffff 4.1px,#d6d7e9 4.1px,#d6d7e9 6.3px);"></div>
<div class="r" style="left:1716px;top:788.2px;width:307.2px;height:86.8px;background:#6e7bdc;"></div>
<div class="t" id="t67" style="left:1735.8px;top:825.6px;font-size:29.6px;color:#fff;font-weight:400;letter-spacing:1.604px;-webkit-text-stroke:1.6px #fff;">Full</div>
<div class="r" style="left:2023.2px;top:788.2px;width:76.8px;height:86.8px;background:repeating-linear-gradient(45deg,#ffffff 0px,#ffffff 4.1px,#d6d7e9 4.1px,#d6d7e9 6.3px);"></div>
<div class="r" style="left:2100px;top:788.2px;width:307.2px;height:86.8px;background:#6e7bdc;"></div>
<div class="t" id="t68" style="left:2119.8px;top:825.6px;font-size:29.6px;color:#fff;font-weight:400;letter-spacing:1.604px;-webkit-text-stroke:1.6px #fff;">Full</div>
<div class="r" style="left:2407.2px;top:788.2px;width:76.8px;height:86.8px;background:repeating-linear-gradient(45deg,#ffffff 0px,#ffffff 4.1px,#d6d7e9 4.1px,#d6d7e9 6.3px);"></div>
<div class="r" style="left:2484px;top:788.2px;width:307.2px;height:86.8px;background:#ecf9ee;"></div>
<div class="r" style="left:2484px;top:788.2px;width:307.2px;height:10px;background:#9acb9b;"></div>
<div class="t" id="t69" style="left:2503.8px;top:825.6px;font-size:29.6px;color:#5f9b62;font-weight:400;letter-spacing:2.334px;-webkit-text-stroke:1.6px #5f9b62;">8h/d free</div>
<div class="r" style="left:2791.2px;top:788.2px;width:74.8px;height:86.8px;background:repeating-linear-gradient(45deg,#ffffff 0px,#ffffff 4.1px,#d6d7e9 4.1px,#d6d7e9 6.3px);"></div>
<div class="r" style="left:0px;top:368px;width:2866px;height:72px;background:#f7f8fb;"></div>
<svg class="r" style="left:33px;top:393px;" width="30" height="22" viewBox="0 0 30 22"><path d="M5 5.500l10 10L25 5.500" fill="none" stroke="#9a9cb8" stroke-width="4.6" stroke-linecap="round"/></svg>
<div class="t" id="t70" style="left:81.0px;top:388.2px;font-size:31.5px;color:#3c4262;font-weight:400;letter-spacing:1.581px;-webkit-text-stroke:0.5px #3c4262;">People</div>
<svg class="r" style="left:212px;top:390px;" width="28" height="28" viewBox="0 0 28 28"><circle cx="14" cy="14" r="11.6" fill="none" stroke="#9a9cb8" stroke-width="2.8"/><path d="M3.2 12.5C4.5 6 9 2.6 14 2.6s9.5 3.4 10.8 9.9c-4.2.6-8.300-1.200-10.300-4.800C12.200 10.500 8.400 12.700 3.200 12.500z" fill="#9a9cb8"/><circle cx="9.8" cy="15.8" r="1.45" fill="#9a9cb8"/><circle cx="18.2" cy="15.8" r="1.45" fill="#9a9cb8"/></svg>
<div class="t" id="t71" style="left:252.4px;top:388.2px;font-size:31.5px;color:#3c4262;font-weight:400;letter-spacing:-3.2px;-webkit-text-stroke:0.4px #3c4262;">17</div>
<div class="r" style="left:0px;top:440px;width:2866px;height:2.5px;background:#e6e7ef;"></div>
<div class="r" style="left:0px;top:876px;width:2866px;height:18px;background:#fff;"></div>
<div class="r" style="left:0px;top:920.5px;width:2866px;height:9px;background:linear-gradient(rgba(60,60,90,0.15),rgba(60,60,90,0));"></div>
<div class="r" style="left:0px;top:894px;width:2866px;height:26.5px;background:#b0b1c5;box-sizing:border-box;border-top:2px solid #9395ae;border-bottom:2px solid #9a9cb4;"></div>
<div class="r" style="left:33px;top:901px;width:28px;height:4.6px;background:#3c4262;"></div>
<div class="r" style="left:33px;top:908.2px;width:28px;height:4.6px;background:#3c4262;"></div>
<div class="r" style="left:1418.5px;top:901px;width:28.5px;height:4.6px;background:#3c4262;"></div>
<div class="r" style="left:1418.5px;top:908.2px;width:28.5px;height:4.6px;background:#3c4262;"></div>
<div class="r" style="left:2773.5px;top:869.5px;width:74.5px;height:74.5px;border-radius:50%;box-sizing:border-box;background:#fff;border:2px solid #b9bbd1"></div>
<svg class="r" style="left:2794.3px;top:890.2px;" width="33" height="33" viewBox="0 0 33 33"><path d="M3.5 3.500l26 26M29.500 3.500l-26 26" stroke="#4555d8" stroke-width="4.4" fill="none"/></svg>
<div class="r" style="left:0px;top:932px;width:2866px;height:0px;background:#fff;"></div>
<div class="r" style="left:23px;top:951px;width:285.5px;height:74.5px;box-sizing:border-box;border-radius:37.25px;background:#fff;border:2px solid #cfd1e2;"></div>
<svg class="r" style="left:47px;top:973px;" width="38" height="30" viewBox="0 0 38 30"><path d="M4.5 4.4h29.2M9 15.3h20.1M13.5 25.3h11.2" stroke="#5468f5" stroke-width="4.6" stroke-linecap="round" fill="none"/></svg>
<div class="t" id="t72" style="left:98.2px;top:974.5px;font-size:29.6px;color:#4555d8;font-weight:400;letter-spacing:1.422px;-webkit-text-stroke:1px #4555d8;">Filter People</div>
<svg class="r" style="left:336.5px;top:969.5px;" width="40" height="38" viewBox="0 0 40 38"><path d="M4 3l32 32M36 3L4 35" stroke="#4555d8" stroke-width="4.6" fill="none"/></svg>
<div class="r" style="left:399px;top:951px;width:482.5px;height:74.5px;box-sizing:border-box;border-radius:7px;background:#fff;border:2px solid #cfd1e2"></div>
<svg class="r" style="left:418.7px;top:963.3px;" width="49" height="49" viewBox="0 0 24 24"><path fill="#3c4262" d="M16 11c1.66 0 2.99-1.34 2.99-3S17.66 5 16 5c-1.66 0-3 1.34-3 3s1.34 3 3 3zm-8 0c1.66 0 2.99-1.34 2.99-3S9.66 5 8 5C6.34 5 5 6.34 5 8s1.34 3 3 3zm0 2c-2.33 0-7 1.17-7 3.5V19h14v-2.5c0-2.33-4.67-3.5-7-3.5zm8 0c-.29 0-.62.02-.97.05 1.16.84 1.97 1.97 1.97 3.45V19h6v-2.5c0-2.33-4.67-3.5-7-3.5z"/></svg>
<div class="t" id="t73" style="left:479.4px;top:972.3px;font-size:34.5px;color:#3c4262;font-weight:400;letter-spacing:1.475px;-webkit-text-stroke:1.2px #3c4262;">Team</div>
<div class="t" id="t74" style="left:585.8px;top:972.3px;font-size:34.5px;color:#3c4262;font-weight:400;letter-spacing:0.647px;-webkit-text-stroke:0.4px #3c4262;">Data &amp; Analytics</div>
<div class="t" id="t75" style="left:907.3px;top:972.3px;font-size:34.5px;color:#adb0c8;font-weight:400;letter-spacing:0.649px;-webkit-text-stroke:0.4px #adb0c8;">Search people...</div>
<div class="r" style="left:1701px;top:951px;width:380px;height:74.5px;box-sizing:border-box;border-radius:37.25px;background:#fff;border:2px solid #cfd1e2;"></div>
<div class="r" style="left:1701px;top:951px;width:175px;height:74.500px;border-radius:38px 0 0 38px;background:#4555d8"></div>
<div class="t" id="t76" style="left:1753.8px;top:973.6px;font-size:30.2px;color:#fff;font-weight:400;letter-spacing:0.598px;-webkit-text-stroke:0.6px #fff;">Daily</div>
<div class="t" id="t77" style="left:1926.6px;top:973.6px;font-size:30.2px;color:#4555d8;font-weight:400;letter-spacing:0.916px;-webkit-text-stroke:0.6px #4555d8;">Weekly</div>
<div class="r" style="left:2107px;top:951px;width:735.5px;height:74.5px;box-sizing:border-box;border-radius:37.25px;background:#fff;border:2px solid #cfd1e2;"></div>
<div class="r" style="left:2107px;top:951px;width:232px;height:74.500px;border-radius:38px 0 0 38px;background:#4555d8"></div>
<div class="r" style="left:2593px;top:953px;width:2px;height:70.5px;background:#cfd1e2;"></div>
<div class="t" id="t78" style="left:2158.8px;top:973.6px;font-size:30.2px;color:#fff;font-weight:400;letter-spacing:1.507px;-webkit-text-stroke:0.6px #fff;">Capacity</div>
<div class="t" id="t79" style="left:2387.8px;top:973.6px;font-size:30.2px;color:#4555d8;font-weight:400;letter-spacing:1.220px;-webkit-text-stroke:0.6px #4555d8;">Availability</div>
<div class="t" id="t80" style="left:2644.8px;top:973.6px;font-size:30.2px;color:#4555d8;font-weight:400;letter-spacing:1.562px;-webkit-text-stroke:0.6px #4555d8;">Utilization</div>
<div class="r" style="left:0px;top:1056px;width:2866px;height:2.5px;background:#e6e7ef;"></div>
<div class="r" style="left:0px;top:1058.5px;width:948px;height:392px;background:#f7f8fb;"></div>
<div class="r" style="left:948px;top:1058.5px;width:1918px;height:300px;background:#fff;"></div>
<div class="t" id="t81" style="left:28.3px;top:1094.0px;font-size:36px;color:#363c5c;font-weight:400;letter-spacing:0.721px;-webkit-text-stroke:1.3px #363c5c;">Displaying data for 17 people</div>
<div class="t" id="t82" style="right:1938.5px;top:1086.9px;font-size:27px;color:#5f6170;font-weight:400;letter-spacing:0.6px;-webkit-text-stroke:0.4px #5f6170;">144h</div>
<div class="t" id="t83" style="right:1938.5px;top:1170.0px;font-size:27px;color:#5f6170;font-weight:400;letter-spacing:0.6px;-webkit-text-stroke:0.4px #5f6170;">96h</div>
<div class="t" id="t84" style="right:1938.5px;top:1254.6px;font-size:27px;color:#5f6170;font-weight:400;letter-spacing:0.6px;-webkit-text-stroke:0.4px #5f6170;">48h</div>
<div class="t" id="t85" style="right:1938.5px;top:1322.5px;font-size:27px;color:#5f6170;font-weight:400;letter-spacing:0.6px;-webkit-text-stroke:0.4px #5f6170;">0h</div>
<div class="r" style="left:15.500px;top:1319px;width:807.500px;height:160px;border-radius:18px;background:#fff"></div>
<div class="r" style="left:36px;top:1349.3px;width:24.6px;height:24.6px;background:#4456d6;"></div>
<div class="t" id="t86" style="left:73.3px;top:1346.6px;font-size:30.5px;color:#3c4262;font-weight:400;letter-spacing:0.710px;-webkit-text-stroke:0.4px #3c4262;">Confirmed Workload</div>
<div class="r" style="left:383.500px;top:1349.300px;width:24.600px;height:24.600px;border-radius:50%;background:#d9b8f5"></div>
<div class="t" id="t87" style="left:420.8px;top:1346.6px;font-size:30.5px;color:#3c4262;font-weight:400;letter-spacing:0.732px;-webkit-text-stroke:0.4px #3c4262;">Effective Capacity</div>
<div class="r" style="left:36px;top:1394.600px;width:24.600px;height:24.600px;border-radius:50%;background:#9a9cb8"></div>
<div class="t" id="t88" style="left:73.3px;top:1391.5px;font-size:30.5px;color:#3c4262;font-weight:400;letter-spacing:0.786px;-webkit-text-stroke:0.4px #3c4262;">Contracted Capacity</div>
<div class="r" style="left:385px;top:1394.600px;width:24.600px;height:24.600px;border-radius:50%;background:repeating-linear-gradient(45deg,#fff 0,#fff 3.800px,#d9dae8 3.800px,#d9dae8 8.200px)"></div>
<div class="t" id="t89" style="left:422.8px;top:1391.5px;font-size:30.5px;color:#3c4262;font-weight:400;letter-spacing:0.964px;-webkit-text-stroke:0.4px #3c4262;">Time Off</div>
<div class="r" style="left:948px;top:1058.5px;width:2px;height:392px;background:#e4e5ee;"></div>
<div class="r" style="left:1178.4px;top:1058.5px;width:77.8px;height:299.5px;background:#eef0fc;"></div>
<div class="r" style="left:1025.3px;top:1058.5px;width:1.5px;height:294.5px;background:#efeff5;"></div>
<div class="r" style="left:1102.1px;top:1058.5px;width:1.5px;height:294.5px;background:#efeff5;"></div>
<div class="r" style="left:1178.9px;top:1058.5px;width:1.5px;height:294.5px;background:#dfe2fa;"></div>
<div class="r" style="left:1255.7px;top:1058.5px;width:1.5px;height:294.5px;background:#dfe2fa;"></div>
<div class="r" style="left:1409.3px;top:1058.5px;width:1.5px;height:294.5px;background:#efeff5;"></div>
<div class="r" style="left:1486.1px;top:1058.5px;width:1.5px;height:294.5px;background:#efeff5;"></div>
<div class="r" style="left:1562.9px;top:1058.5px;width:1.5px;height:294.5px;background:#efeff5;"></div>
<div class="r" style="left:1639.7px;top:1058.5px;width:1.5px;height:294.5px;background:#efeff5;"></div>
<div class="r" style="left:1793.3px;top:1058.5px;width:1.5px;height:294.5px;background:#efeff5;"></div>
<div class="r" style="left:1870.1px;top:1058.5px;width:1.5px;height:294.5px;background:#efeff5;"></div>
<div class="r" style="left:1946.9px;top:1058.5px;width:1.5px;height:294.5px;background:#efeff5;"></div>
<div class="r" style="left:2023.7px;top:1058.5px;width:1.5px;height:294.5px;background:#efeff5;"></div>
<div class="r" style="left:2177.3px;top:1058.5px;width:1.5px;height:294.5px;background:#efeff5;"></div>
<div class="r" style="left:2254.1px;top:1058.5px;width:1.5px;height:294.5px;background:#efeff5;"></div>
<div class="r" style="left:2330.9px;top:1058.5px;width:1.5px;height:294.5px;background:#efeff5;"></div>
<div class="r" style="left:2407.7px;top:1058.5px;width:1.5px;height:294.5px;background:#efeff5;"></div>
<div class="r" style="left:2561.3px;top:1058.5px;width:1.5px;height:294.5px;background:#efeff5;"></div>
<div class="r" style="left:2638.1px;top:1058.5px;width:1.5px;height:294.5px;background:#efeff5;"></div>
<div class="r" style="left:2714.9px;top:1058.5px;width:1.5px;height:294.5px;background:#efeff5;"></div>
<div class="r" style="left:2791.7px;top:1058.5px;width:1.5px;height:294.5px;background:#efeff5;"></div>
<div class="r" style="left:1330.5px;top:1058.5px;width:5px;height:299.5px;background:#e4e5ee;"></div>
<div class="r" style="left:1714.5px;top:1058.5px;width:5px;height:299.5px;background:#e4e5ee;"></div>
<div class="r" style="left:2098.5px;top:1058.5px;width:5px;height:299.5px;background:#e4e5ee;"></div>
<div class="r" style="left:2482.5px;top:1058.5px;width:5px;height:299.5px;background:#e4e5ee;"></div>
<div class="r" style="left:2866.5px;top:1058.5px;width:5px;height:299.5px;background:#e4e5ee;"></div>
<svg class="r" style="left:0;top:0" width="2866" height="1450" viewBox="0 0 2866 1450"><rect x="955.2" y="1190.5" width="62.4" height="162.5" fill="#4456d6"/><rect x="1031.9" y="1190.5" width="62.4" height="162.5" fill="#4456d6"/><rect x="1108.6" y="1161.5" width="62.4" height="191.5" fill="#4456d6"/><rect x="1185.3" y="1147.4" width="62.4" height="205.6" fill="#4456d6"/><rect x="1261.9" y="1161.5" width="62.4" height="191.5" fill="#4456d6"/><rect x="1338.6" y="1174.7" width="62.4" height="178.3" fill="#4456d6"/><rect x="1415.3" y="1174.7" width="62.4" height="178.3" fill="#4456d6"/><rect x="1492.0" y="1174.7" width="62.4" height="178.3" fill="#4456d6"/><rect x="1568.7" y="1160.6" width="62.4" height="192.4" fill="#4456d6"/><rect x="1645.4" y="1160.6" width="62.4" height="192.4" fill="#4456d6"/><rect x="1722.1" y="1136.0" width="62.4" height="217.0" fill="#4456d6"/><rect x="1798.7" y="1155.3" width="62.4" height="197.7" fill="#4456d6"/><rect x="1875.4" y="1126.9" width="62.4" height="226.1" fill="#4456d6"/><rect x="1952.1" y="1098.6" width="62.4" height="254.4" fill="#4456d6"/><rect x="2028.8" y="1112.8" width="62.4" height="240.2" fill="#4456d6"/><rect x="2105.5" y="1169.0" width="62.4" height="184.0" fill="#4456d6"/><rect x="2182.2" y="1161.7" width="62.4" height="191.3" fill="#4456d6"/><rect x="2258.8" y="1161.7" width="62.4" height="191.3" fill="#4456d6"/><rect x="2335.5" y="1161.7" width="62.4" height="191.3" fill="#4456d6"/><rect x="2412.2" y="1175.9" width="62.4" height="177.1" fill="#4456d6"/><rect x="2488.9" y="1190.1" width="62.4" height="162.9" fill="#4456d6"/><rect x="2565.6" y="1175.9" width="62.4" height="177.1" fill="#4456d6"/><rect x="2642.3" y="1190.1" width="62.4" height="162.9" fill="#4456d6"/><rect x="2719.0" y="1175.9" width="62.4" height="177.1" fill="#4456d6"/><rect x="2795.6" y="1175.9" width="62.4" height="177.1" fill="#4456d6"/><path d="M988.4 1183.6 L1065.0 1183.6 L1141.7 1183.6 L1218.3 1183.6 C1250.5 1183.6 1262.7 1197.8 1294.9 1197.8 C1327.2 1197.8 1339.3 1183.6 1371.5 1183.6 L1448.2 1183.6 L1524.8 1183.6 L1601.4 1183.6 C1633.7 1183.6 1645.8 1197.8 1678.1 1197.8 C1710.3 1197.8 1722.4 1183.6 1754.7 1183.6 L1831.3 1183.6 L1908.0 1183.6 L1984.6 1183.6 C2016.8 1183.6 2029.0 1197.8 2061.2 1197.8 C2093.5 1197.8 2105.6 1183.6 2137.8 1183.6 L2214.5 1183.6 L2291.1 1183.6 L2367.7 1183.6 C2400.0 1183.6 2412.1 1197.8 2444.4 1197.8 C2476.6 1197.8 2488.7 1183.6 2521.0 1183.6 L2597.6 1183.6 L2674.3 1183.6 L2750.9 1183.6 C2783.1 1183.6 2795.3 1191.8 2827.5 1197.8 L2827.5 1353 L988.4 1353 Z" fill="rgba(160,70,232,0.235)"/><path d="M988.4 1183.6 L1065.0 1183.6 L1141.7 1183.6 L1218.3 1183.6 C1250.5 1183.6 1262.7 1197.8 1294.9 1197.8 C1327.2 1197.8 1339.3 1183.6 1371.5 1183.6 L1448.2 1183.6 L1524.8 1183.6 L1601.4 1183.6 C1633.7 1183.6 1645.8 1197.8 1678.1 1197.8 C1710.3 1197.8 1722.4 1183.6 1754.7 1183.6 L1831.3 1183.6 L1908.0 1183.6 L1984.6 1183.6 C2016.8 1183.6 2029.0 1197.8 2061.2 1197.8 C2093.5 1197.8 2105.6 1183.6 2137.8 1183.6 L2214.5 1183.6 L2291.1 1183.6 L2367.7 1183.6 C2400.0 1183.6 2412.1 1197.8 2444.4 1197.8 C2476.6 1197.8 2488.7 1183.6 2521.0 1183.6 L2597.6 1183.6 L2674.3 1183.6 L2750.9 1183.6 C2783.1 1183.6 2795.3 1191.8 2827.5 1197.8" fill="none" stroke="#9a2be6" stroke-width="2.7"/></svg>
<div class="r" style="left:948px;top:1353px;width:1918px;height:5px;background:#eeeef4;"></div>
<div class="r" style="left:950px;top:1358px;width:384px;height:53px;background:#fff;"></div>
<div class="r" style="left:1334px;top:1358px;width:1532px;height:53px;background:#f8f9fb;"></div>
<div class="r" style="left:950px;top:1411px;width:1916px;height:39px;background:#f2f3f6;"></div>
<div class="r" style="left:1180.2px;top:1358px;width:76.8px;height:53px;background:#8f94b8;"></div>
<div class="t" id="t90" style="left:965.0px;top:1425.3px;font-size:29.2px;color:#363c5c;font-weight:400;letter-spacing:0.361px;-webkit-text-stroke:0.4px #363c5c;">Feb '25 | W9</div>
<div class="t" id="t91" style="left:952.8px;top:1371.2px;font-size:27.5px;color:#363c5c;font-weight:400;letter-spacing:2.906px;-webkit-text-stroke:0.4px #363c5c;">24</div>
<div class="t" id="t92" style="left:1029.5px;top:1371.2px;font-size:27.5px;color:#363c5c;font-weight:400;letter-spacing:2.906px;-webkit-text-stroke:0.4px #363c5c;">25</div>
<div class="t" id="t93" style="left:1106.3px;top:1371.2px;font-size:27.5px;color:#363c5c;font-weight:400;letter-spacing:2.906px;-webkit-text-stroke:0.4px #363c5c;">26</div>
<div class="t" id="t94" style="left:1183.0px;top:1371.2px;font-size:27.5px;color:#fff;font-weight:700;letter-spacing:2.906px;">27</div>
<div class="t" id="t95" style="left:1259.7px;top:1371.2px;font-size:27.5px;color:#363c5c;font-weight:400;letter-spacing:2.906px;-webkit-text-stroke:0.4px #363c5c;">28</div>
<div class="t" id="t96" style="left:1351.0px;top:1425.3px;font-size:29.2px;color:#6b7194;font-weight:400;letter-spacing:0.605px;-webkit-text-stroke:0.4px #6b7194;">Mar '25 | W10</div>
<div class="t" id="t97" style="left:1336.5px;top:1371.2px;font-size:27.5px;color:#6b7194;font-weight:400;letter-spacing:0.703px;-webkit-text-stroke:0.4px #6b7194;">3</div>
<div class="t" id="t98" style="left:1413.2px;top:1371.2px;font-size:27.5px;color:#6b7194;font-weight:400;letter-spacing:0.703px;-webkit-text-stroke:0.4px #6b7194;">4</div>
<div class="t" id="t99" style="left:1489.9px;top:1371.2px;font-size:27.5px;color:#6b7194;font-weight:400;letter-spacing:0.703px;-webkit-text-stroke:0.4px #6b7194;">5</div>
<div class="t" id="t100" style="left:1566.6px;top:1371.2px;font-size:27.5px;color:#6b7194;font-weight:400;letter-spacing:0.703px;-webkit-text-stroke:0.4px #6b7194;">6</div>
<div class="t" id="t101" style="left:1643.4px;top:1371.2px;font-size:27.5px;color:#6b7194;font-weight:400;letter-spacing:0.703px;-webkit-text-stroke:0.4px #6b7194;">7</div>
<div class="t" id="t102" style="left:1734.6px;top:1425.3px;font-size:29.2px;color:#6b7194;font-weight:400;letter-spacing:-1.930px;-webkit-text-stroke:0.4px #6b7194;">W11</div>
<div class="t" id="t103" style="left:1720.1px;top:1371.2px;font-size:27.5px;color:#6b7194;font-weight:400;letter-spacing:2.906px;-webkit-text-stroke:0.4px #6b7194;">10</div>
<div class="t" id="t104" style="left:1796.8px;top:1371.2px;font-size:27.5px;color:#6b7194;font-weight:400;letter-spacing:4.938px;-webkit-text-stroke:0.4px #6b7194;">11</div>
<div class="t" id="t105" style="left:1873.6px;top:1371.2px;font-size:27.5px;color:#6b7194;font-weight:400;letter-spacing:2.906px;-webkit-text-stroke:0.4px #6b7194;">12</div>
<div class="t" id="t106" style="left:1950.3px;top:1371.2px;font-size:27.5px;color:#6b7194;font-weight:400;letter-spacing:2.906px;-webkit-text-stroke:0.4px #6b7194;">13</div>
<div class="t" id="t107" style="left:2027.0px;top:1371.2px;font-size:27.5px;color:#6b7194;font-weight:400;letter-spacing:2.906px;-webkit-text-stroke:0.4px #6b7194;">14</div>
<div class="t" id="t108" style="left:2118.2px;top:1425.3px;font-size:29.2px;color:#6b7194;font-weight:400;letter-spacing:-1.758px;-webkit-text-stroke:0.4px #6b7194;">W12</div>
<div class="t" id="t109" style="left:2103.8px;top:1371.2px;font-size:27.5px;color:#6b7194;font-weight:400;letter-spacing:2.906px;-webkit-text-stroke:0.4px #6b7194;">17</div>
<div class="t" id="t110" style="left:2180.5px;top:1371.2px;font-size:27.5px;color:#6b7194;font-weight:400;letter-spacing:2.906px;-webkit-text-stroke:0.4px #6b7194;">18</div>
<div class="t" id="t111" style="left:2257.2px;top:1371.2px;font-size:27.5px;color:#6b7194;font-weight:400;letter-spacing:2.906px;-webkit-text-stroke:0.4px #6b7194;">19</div>
<div class="t" id="t112" style="left:2333.9px;top:1371.2px;font-size:27.5px;color:#6b7194;font-weight:400;letter-spacing:2.906px;-webkit-text-stroke:0.4px #6b7194;">20</div>
<div class="t" id="t113" style="left:2410.7px;top:1371.2px;font-size:27.5px;color:#6b7194;font-weight:400;letter-spacing:2.906px;-webkit-text-stroke:0.4px #6b7194;">21</div>
<div class="t" id="t114" style="left:2501.9px;top:1425.3px;font-size:29.2px;color:#6b7194;font-weight:400;letter-spacing:-1.758px;-webkit-text-stroke:0.4px #6b7194;">W13</div>
<div class="t" id="t115" style="left:2487.4px;top:1371.2px;font-size:27.5px;color:#6b7194;font-weight:400;letter-spacing:2.906px;-webkit-text-stroke:0.4px #6b7194;">24</div>
<div class="t" id="t116" style="left:2564.1px;top:1371.2px;font-size:27.5px;color:#6b7194;font-weight:400;letter-spacing:2.906px;-webkit-text-stroke:0.4px #6b7194;">25</div>
<div class="t" id="t117" style="left:2640.9px;top:1371.2px;font-size:27.5px;color:#6b7194;font-weight:400;letter-spacing:2.906px;-webkit-text-stroke:0.4px #6b7194;">26</div>
<div class="t" id="t118" style="left:2717.6px;top:1371.2px;font-size:27.5px;color:#6b7194;font-weight:400;letter-spacing:2.906px;-webkit-text-stroke:0.4px #6b7194;">27</div>
<div class="t" id="t119" style="left:2794.3px;top:1371.2px;font-size:27.5px;color:#6b7194;font-weight:400;letter-spacing:2.906px;-webkit-text-stroke:0.4px #6b7194;">28</div>
<div class="r" style="left:1331px;top:1353px;width:5px;height:97px;background:#d7d8e6;"></div>
<div class="r" style="left:1714.65px;top:1353px;width:5px;height:97px;background:#d7d8e6;"></div>
<div class="r" style="left:2098.3px;top:1353px;width:5px;height:97px;background:#d7d8e6;"></div>
<div class="r" style="left:2481.95px;top:1353px;width:5px;height:97px;background:#d7d8e6;"></div>
<div class="r" style="left:2865.6px;top:1353px;width:5px;height:97px;background:#d7d8e6;"></div>
<div class="r" style="left:1311px;top:1383px;width:20px;height:54px;background:rgba(255,255,255,0.45);"></div>
<div class="r" style="left:1336px;top:1383px;width:20px;height:54px;background:rgba(255,255,255,0.45);"></div>
<svg class="r" style="left:1313px;top:1399px;" width="13" height="22" viewBox="0 0 13 22"><path d="M13 0v22L0 11z" fill="#b1b3ca"/></svg>
<svg class="r" style="left:1341px;top:1399px;" width="13" height="22" viewBox="0 0 13 22"><path d="M0 0v22l13-11z" fill="#b1b3ca"/></svg>
<div class="r" style="left:1694.65px;top:1383px;width:20px;height:54px;background:rgba(255,255,255,0.45);"></div>
<div class="r" style="left:1719.65px;top:1383px;width:20px;height:54px;background:rgba(255,255,255,0.45);"></div>
<svg class="r" style="left:1696.65px;top:1399px;" width="13" height="22" viewBox="0 0 13 22"><path d="M13 0v22L0 11z" fill="#b1b3ca"/></svg>
<svg class="r" style="left:1724.65px;top:1399px;" width="13" height="22" viewBox="0 0 13 22"><path d="M0 0v22l13-11z" fill="#b1b3ca"/></svg>
<div class="r" style="left:2078.3px;top:1383px;width:20px;height:54px;background:rgba(255,255,255,0.45);"></div>
<div class="r" style="left:2103.3px;top:1383px;width:20px;height:54px;background:rgba(255,255,255,0.45);"></div>
<svg class="r" style="left:2080.3px;top:1399px;" width="13" height="22" viewBox="0 0 13 22"><path d="M13 0v22L0 11z" fill="#b1b3ca"/></svg>
<svg class="r" style="left:2108.3px;top:1399px;" width="13" height="22" viewBox="0 0 13 22"><path d="M0 0v22l13-11z" fill="#b1b3ca"/></svg>
<div class="r" style="left:2461.95px;top:1383px;width:20px;height:54px;background:rgba(255,255,255,0.45);"></div>
<div class="r" style="left:2486.95px;top:1383px;width:20px;height:54px;background:rgba(255,255,255,0.45);"></div>
<svg class="r" style="left:2463.95px;top:1399px;" width="13" height="22" viewBox="0 0 13 22"><path d="M13 0v22L0 11z" fill="#b1b3ca"/></svg>
<svg class="r" style="left:2491.95px;top:1399px;" width="13" height="22" viewBox="0 0 13 22"><path d="M0 0v22l13-11z" fill="#b1b3ca"/></svg>
<div class="r" style="left:2845.6px;top:1383px;width:20px;height:54px;background:rgba(255,255,255,0.45);"></div>
<div class="r" style="left:2870.6px;top:1383px;width:20px;height:54px;background:rgba(255,255,255,0.45);"></div>
<svg class="r" style="left:2847.6px;top:1399px;" width="13" height="22" viewBox="0 0 13 22"><path d="M13 0v22L0 11z" fill="#b1b3ca"/></svg>
<svg class="r" style="left:2875.6px;top:1399px;" width="13" height="22" viewBox="0 0 13 22"><path d="M0 0v22l13-11z" fill="#b1b3ca"/></svg>
<div class="r" style="left:0px;top:1412px;width:2866px;height:38px;background:linear-gradient(rgba(30,30,40,0),rgba(30,30,40,0.07));"></div>
</body></html>
